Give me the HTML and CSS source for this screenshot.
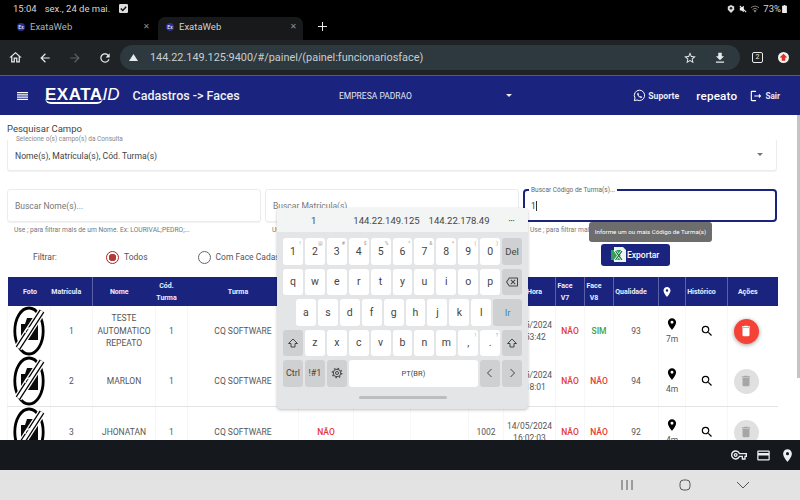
FILE: index.html
```html
<!DOCTYPE html>
<html lang="pt-BR">
<head>
    <meta charset="UTF-8">
    <meta name="viewport" content="width=device-width, initial-scale=1.0">
    <title>ExataWeb</title>
    <link rel="stylesheet" href="styles.css">
</head>
<body>
    <svg class="defs" width="0" height="0">
        <symbol id="i-pin" viewBox="0 0 24 24"><path d="M12 2C8.13 2 5 5.13 5 9c0 5.25 7 13 7 13s7-7.75 7-13c0-3.87-3.13-7-7-7zm0 9.5a2.5 2.5 0 0 1 0-5 2.5 2.5 0 0 1 0 5z"/></symbol>
        <symbol id="i-search" viewBox="0 0 24 24"><path d="M15.5 14h-.79l-.28-.27A6.471 6.471 0 0 0 16 9.5 6.5 6.5 0 1 0 9.5 16c1.61 0 3.09-.59 4.23-1.57l.27.28v.79l5 4.99L20.49 19l-4.99-5zm-6 0C7.01 14 5 11.99 5 9.5S7.01 5 9.5 5 14 7.01 14 9.5 11.99 14 9.5 14z"/></symbol>
        <symbol id="i-trash" viewBox="0 0 24 24"><path d="M6 19c0 1.1.9 2 2 2h8c1.1 0 2-.9 2-2V7H6v12zM19 4h-3.5l-1-1h-5l-1 1H5v2h14V4z"/></symbol>
        <symbol id="i-nophoto" viewBox="0 0 32 50">
            <ellipse cx="16" cy="25" rx="14.2" ry="23" fill="#fff" stroke="#000" stroke-width="2.8"/>
            <path d="M8 18h4l2-6h7l1 4h3v18H8z" fill="#0a0a0a"/>
            <path d="M29 5 5 42" stroke="#fff" stroke-width="8"/>
            <path d="M29 5 5 42" stroke="#000" stroke-width="5.500"/>
            <path d="M29 5 5 42" stroke="#fff" stroke-width="3"/>
            <path d="M12 27a5 5 0 0 1 6-5" fill="none" stroke="#fff" stroke-width="1.300"/>
        </symbol>
    </svg>

    <div class="status-bar">
        <span class="status-time">15:04</span>
        <span class="status-date">sex., 24 de mai.</span>
        <svg class="status-check" viewBox="0 0 10 10"><rect width="10" height="10" rx="1.5" fill="#ddd"/><path d="M2 5l2.2 2.2L8 3" fill="none" stroke="#111" stroke-width="1.6"/></svg>
        <span class="status-right">
            <svg class="status-ico" viewBox="0 0 10 10"><path d="M5 0l4 2v4l-4 4-4-4V2z" fill="#ddd"/><circle cx="5" cy="4" r="1.6" fill="#222"/></svg>
            <svg class="status-ico" viewBox="0 0 10 10"><path d="M1 3h2l3-2v8L3 7H1z" fill="#eee"/><path d="M1 1l8 8" stroke="#eee" stroke-width="1.3"/></svg>
            <svg class="status-ico" viewBox="0 0 10 10"><path d="M0 3.5a7 7 0 0 1 10 0M2 5.6a4.2 4.2 0 0 1 6 0M5 9 3.6 7.3a2 2 0 0 1 2.8 0z" fill="none" stroke="#aaa" stroke-width=".9"/></svg>
            <span>73%</span>
            <svg class="status-batt" viewBox="0 0 6 10"><path d="M2 0h2v1h2v9H0V1h2z" fill="#eee"/></svg>
        </span>
    </div>

    <div class="tab-strip">
        <div class="tab tab-first">
            <span class="favicon">Ex</span>
            <span class="tab-title">ExataWeb</span>
            <span class="tab-close">&#10005;</span>
        </div>
        <div class="tab tab-active">
            <span class="favicon">Ex</span>
            <span class="tab-title">ExataWeb</span>
            <span class="tab-close">&#10005;</span>
        </div>
        <svg class="tab-new" viewBox="0 0 10 10"><path d="M5 0v10M0 5h10" stroke="#eee" stroke-width="1.1"/></svg>
    </div>

    <div class="toolbar">
        <svg class="tool-ico first" viewBox="0 0 24 24"><path d="M12 5.69l5 4.5V18h-2v-6H9v6H7v-7.81l5-4.5M12 3L2 12h3v8h6v-6h2v6h6v-8h3L12 3z"/></svg>
        <svg class="tool-ico" viewBox="0 0 24 24"><path d="M20 11H7.83l5.59-5.59L12 4l-8 8 8 8 1.41-1.41L7.83 13H20v-2z"/></svg>
        <svg class="tool-ico off" viewBox="0 0 24 24"><path d="M12 4l-1.41 1.41L16.17 11H4v2h12.17l-5.58 5.59L12 20l8-8z"/></svg>
        <svg class="tool-ico" viewBox="0 0 24 24"><path d="M17.65 6.35C16.2 4.9 14.21 4 12 4c-4.42 0-7.99 3.58-7.99 8s3.57 8 7.99 8c3.73 0 6.84-2.55 7.73-6h-2.08c-.82 2.33-3.04 4-5.65 4-3.31 0-6-2.69-6-6s2.69-6 6-6c1.66 0 3.14.69 4.22 1.78L13 11h7V4l-2.35 2.35z"/></svg>
        <div class="url-pill">
            <svg class="url-warn" viewBox="0 0 10 10"><path d="M5 1l5 8H0z" fill="#e8eaed"/></svg>
            <span class="url-text">144.22.149.125:9400/#/painel/(painel:funcionariosface)</span>
            <svg class="url-ico star" viewBox="0 0 24 24"><path d="M22 9.24l-7.19-.62L12 2 9.19 8.63 2 9.24l5.46 4.73L5.82 21 12 17.27 18.18 21l-1.63-7.03L22 9.24zM12 15.4l-3.76 2.27 1-4.28-3.32-2.88 4.38-.38L12 6.1l1.71 4.04 4.38.38-3.32 2.88 1 4.28L12 15.4z"/></svg>
            <svg class="url-ico" viewBox="0 0 24 24"><path d="M19 9h-4V3H9v6H5l7 7 7-7zM5 18v2h14v-2H5z"/></svg>
        </div>
        <span class="tab-count">2</span>
        <span class="update-dot"><svg viewBox="0 0 10 10"><path d="M5 1.5 8.5 5H6.6v3H3.4V5H1.5z" fill="#d93025"/></svg></span>
    </div>

    <header class="navbar">
        <svg class="nav-menu" viewBox="0 0 14 10"><path d="M0 0h14v1.6H0zM0 2.8h14v1.6H0zM0 5.6h14v1.6H0zM0 8.4h14V10H0z" fill="#fff"/></svg>
        <div class="logo"><span class="logo-main">EXATA</span><span class="logo-id">ID</span></div>
        <div class="nav-title">Cadastros -&gt; Faces</div>
        <div class="nav-company">
            <span>EMPRESA PADRAO</span>
            <span class="caret"></span>
        </div>
        <div class="nav-right">
            <svg class="nav-wa" viewBox="0 0 24 24"><path d="M12 2.2a9.6 9.6 0 0 0-8.3 14.5L2.4 21.6l5-1.3A9.6 9.6 0 1 0 12 2.2z" fill="none" stroke="#fff" stroke-width="1.8"/><path d="M8.8 7.2c-.9.7-1.3 1.9-.8 3.3 1 2.6 2.9 4.6 5.6 5.7 1.4.5 2.6.1 3.3-.9.3-.5.2-1-.2-1.2l-1.9-.9c-.4-.2-.7-.1-1 .3l-.6.7c-1.400-.6-2.500-1.700-3.100-3l.6-.6c.3-.3.4-.6.2-1l-.8-1.900c-.2-.6-.8-.8-1.300-.5z" fill="#fff"/></svg>
            <span class="nav-support">Suporte</span>
            <span class="nav-user">repeato</span>
            <svg class="nav-exit" viewBox="0 0 24 24"><path d="M5 5h7V3H5c-1.100 0-2 .9-2 2v14c0 1.100.9 2 2 2h7v-2H5V5zm16 7l-4-4v3H9v2h8v3l4-4z" fill="#fff"/></svg>
            <span class="nav-sair">Sair</span>
        </div>
    </header>

    <main class="page">
        <div class="search-title">Pesquisar Campo</div>
        <div class="outlined select-box">
            <span class="float-label">Selecione o(s) campo(s) da Consulta</span>
            <span>Nome(s), Matrícula(s), Cód. Turma(s)</span>
            <span class="select-caret"></span>
        </div>

        <div class="search-row">
            <div class="search-col">
                <div class="outlined field"><span class="placeholder">Buscar Nome(s)...</span></div>
                <div class="hint">Use ; para filtrar mais de um Nome. Ex: LOURIVAL;PEDRO;...</div>
            </div>
            <div class="search-col">
                <div class="outlined field"><span class="placeholder">Buscar Matrícula(s)...</span></div>
                <div class="hint">Use ; para filtrar mais de uma Matrícula</div>
            </div>
            <div class="search-col">
                <div class="field field-focus">
                    <span class="float-label focus-label">Buscar Código de Turma(s)...</span>
                    <span class="typed">1</span><span class="cursor"></span>
                </div>
                <div class="hint">Use ; para filtrar mais de um Código</div>
            </div>
        </div>

        <div class="filter-row">
            <span class="filter-label">Filtrar:</span>
            <span class="radio radio-on"></span>
            <span class="radio-text">Todos</span>
            <span class="radio radio-second"></span>
            <span class="radio-text">Com Face Cadastrada</span>
            <button class="export-btn">
                <svg class="excel" viewBox="0 0 16 16">
                    <path d="M3 0h9l3 3v12H3z" fill="#e9f5ec"/>
                    <path d="M0 3h10v10H0z" fill="#2e9e5b"/>
                    <path d="M3.500 3 12 14M12 3l-8.500 11" stroke="#fff" stroke-width="2.600"/>
                    <path d="M4.500 4 11 13M11 4l-6.500 9" stroke="#17693a" stroke-width="1.200"/>
                </svg>
                Exportar
            </button>
        </div>

        <table class="grid">
            <colgroup>
                <col class="c-foto"><col class="c-mat"><col class="c-nome"><col class="c-cod"><col class="c-turma">
                <col class="c-a"><col class="c-b"><col class="c-c"><col class="c-d"><col class="c-hora">
                <col class="c-face"><col class="c-face"><col class="c-qual"><col class="c-pin"><col class="c-hist"><col class="c-acao">
            </colgroup>
            <thead>
                <tr>
                    <th class="th-foto">Foto</th><th>Matrícula</th><th class="th-line">Nome</th><th>Cód. Turma</th><th>Turma</th>
                    <th></th><th></th><th></th><th></th><th class="th-line th-hora">Hora</th>
                    <th class="th-line">Face V7</th><th class="th-line">Face V8</th><th class="th-line">Qualidade</th>
                    <th class="th-line"><svg class="th-pin"><use href="#i-pin"/></svg></th>
                    <th class="th-line">Histórico</th><th class="th-line">Ações</th>
                </tr>
            </thead>
            <tbody>
                <tr>
                    <td><svg class="nophoto"><use href="#i-nophoto"/></svg></td>
                    <td>1</td><td>TESTE AUTOMATICO REPEATO</td><td>1</td><td>CQ SOFTWARE</td>
                    <td></td><td></td><td></td><td></td><td>14/05/2024 15:53:42</td>
                    <td class="no">NÃO</td><td class="yes">SIM</td><td>93</td>
                    <td><svg class="pin"><use href="#i-pin"/></svg><div>7m</div></td>
                    <td><svg class="lens"><use href="#i-search"/></svg></td>
                    <td class="td-fab"><span class="fab fab-red"><svg><use href="#i-trash"/></svg></span></td>
                </tr>
                <tr class="row-end">
                    <td><svg class="nophoto"><use href="#i-nophoto"/></svg></td>
                    <td>2</td><td>MARLON</td><td>1</td><td>CQ SOFTWARE</td>
                    <td></td><td></td><td></td><td></td><td>14/05/2024 16:18:01</td>
                    <td class="no">NÃO</td><td class="no">NÃO</td><td>94</td>
                    <td><svg class="pin"><use href="#i-pin"/></svg><div>4m</div></td>
                    <td><svg class="lens"><use href="#i-search"/></svg></td>
                    <td class="td-fab"><span class="fab"><svg><use href="#i-trash"/></svg></span></td>
                </tr>
                <tr>
                    <td><svg class="nophoto"><use href="#i-nophoto"/></svg></td>
                    <td>3</td><td>JHONATAN</td><td>1</td><td>CQ SOFTWARE</td>
                    <td class="no">NÃO</td><td></td><td></td><td>1002</td><td>14/05/2024 16:02:03</td>
                    <td class="no">NÃO</td><td class="no">NÃO</td><td>92</td>
                    <td><svg class="pin"><use href="#i-pin"/></svg><div>4m</div></td>
                    <td><svg class="lens"><use href="#i-search"/></svg></td>
                    <td class="td-fab"><span class="fab"><svg><use href="#i-trash"/></svg></span></td>
                </tr>
            </tbody>
        </table>

        <div class="scroll-thumb"></div>
        <div class="tooltip">Informe um ou mais Código de Turma(s)</div>

        <div class="keyboard">
            <div class="kb-suggest">
                <span class="sug-one">1</span>
                <span class="sug-ip">144.22.149.125</span>
                <span class="sug-ip2">144.22.178.49</span>
                <span class="sug-more">•••</span>
            </div>
            <div class="kb-keys">
                <div class="kb-row">
                    <span class="key">1<sup>!</sup></span><span class="key">2<sup>@</sup></span><span class="key">3<sup>#</sup></span><span class="key">4<sup>$</sup></span><span class="key">5<sup>%</sup></span><span class="key">6<sup>^</sup></span><span class="key">7<sup>&amp;</sup></span><span class="key">8<sup>*</sup></span><span class="key">9<sup>(</sup></span><span class="key">0<sup>)</sup></span><span class="key key-fn">Del</span>
                </div>
                <div class="kb-row">
                    <span class="key">q</span><span class="key">w</span><span class="key">e</span><span class="key">r</span><span class="key">t</span><span class="key">y</span><span class="key">u</span><span class="key">i</span><span class="key">o</span><span class="key">p</span>
                    <span class="key key-fn"><svg class="kb-ico" viewBox="0 0 24 24"><path d="M22 3H7c-.69 0-1.230.35-1.590.88L0 12l5.410 8.110c.36.53.9.89 1.590.89h15c1.100 0 2-.9 2-2V5c0-1.100-.9-2-2-2zm0 16H7.070L2.400 12l4.660-7H22v14zM10.410 17 14 13.410 17.590 17 19 15.590 15.410 12 19 8.410 17.590 7 14 10.590 10.410 7 9 8.410 12.590 12 9 15.590z"/></svg></span>
                </div>
                <div class="kb-row kb-row-home">
                    <span class="key">a</span><span class="key">s</span><span class="key">d</span><span class="key">f</span><span class="key">g</span><span class="key">h</span><span class="key">j</span><span class="key">k</span><span class="key">l</span>
                    <span class="key key-fn key-go">Ir</span>
                </div>
                <div class="kb-row">
                    <span class="key key-fn"><svg class="kb-ico" viewBox="0 0 24 24"><path d="M12 4 3 13h5v7h8v-7h5z" fill="none" stroke="#444" stroke-width="2"/></svg></span>
                    <span class="key">z</span><span class="key">x</span><span class="key">c</span><span class="key">v</span><span class="key">b</span><span class="key">n</span><span class="key">m</span><span class="key">,<sup>!</sup></span><span class="key">.<sup>?</sup></span>
                    <span class="key key-fn"><svg class="kb-ico" viewBox="0 0 24 24"><path d="M12 4 3 13h5v7h8v-7h5z" fill="none" stroke="#444" stroke-width="2"/></svg></span>
                </div>
                <div class="kb-row">
                    <span class="key key-fn key-small">Ctrl</span><span class="key key-fn key-small">!#1</span>
                    <span class="key key-fn"><svg class="kb-ico" viewBox="0 0 24 24"><circle cx="12" cy="12" r="3" fill="none" stroke="#444" stroke-width="2"/><circle cx="12" cy="12" r="7.500" fill="none" stroke="#444" stroke-width="2"/><circle cx="12" cy="12" r="9.500" fill="none" stroke="#444" stroke-width="2.500" stroke-dasharray="3 4.450"/></svg></span>
                    <span class="key key-space">PT(BR)</span>
                    <span class="key key-fn"><svg class="kb-ico" viewBox="0 0 24 24"><path d="M15 4l-8 8 8 8" fill="none" stroke="#444" stroke-width="2"/></svg></span>
                    <span class="key key-fn"><svg class="kb-ico" viewBox="0 0 24 24"><path d="M9 4l8 8-8 8" fill="none" stroke="#444" stroke-width="2"/></svg></span>
                </div>
                <div class="kb-handle"></div>
            </div>
        </div>
    </main>

    <div class="sys-bar">
        <svg class="sys-ico sys-key" viewBox="0 0 24 24"><path d="M22 19h-6v-4h-2.680c-1.140 2.420-3.600 4-6.320 4-3.860 0-7-3.140-7-7s3.140-7 7-7c2.720 0 5.170 1.580 6.320 4H24v6h-2v4zm-4-2h2v-4h2v-2H11.940l-.23-.67C11.010 8.340 9.110 7 7 7c-2.760 0-5 2.240-5 5s2.240 5 5 5c2.110 0 4.010-1.340 4.710-3.330l.23-.67H18v4zM7 15c-1.650 0-3-1.350-3-3s1.350-3 3-3 3 1.350 3 3-1.350 3-3 3zm0-4c-.55 0-1 .45-1 1s.45 1 1 1 1-.45 1-1-.45-1-1-1z"/></svg>
        <svg class="sys-ico" viewBox="0 0 24 24"><path d="M20 4H4c-1.110 0-1.990.89-1.990 2L2 18c0 1.110.89 2 2 2h16c1.110 0 2-.89 2-2V6c0-1.110-.89-2-2-2zm0 14H4v-6h16v6zm0-10H4V6h16v2z"/></svg>
        <svg class="sys-ico"><use href="#i-pin"/></svg>
    </div>

    <div class="nav-keys">
        <svg class="nav-key" viewBox="0 0 14 14"><path d="M2 2v10M7 2v10M12 2v10" stroke="#555" stroke-width="1"/></svg>
        <svg class="nav-key" viewBox="0 0 14 14"><rect x="2" y="2" width="10" height="10" rx="3.500" fill="none" stroke="#555" stroke-width="1"/></svg>
        <svg class="nav-key" viewBox="0 0 14 14"><path d="M1 4l6 6 6-6" fill="none" stroke="#555" stroke-width="1"/></svg>
    </div>
</body>
</html>
```

FILE: styles.css
```css
* {
    box-sizing: border-box;
}
html, body {
    margin: 0;
    height: 100%;
    overflow: hidden;
}
body {
    width: 800px;
    height: 500px;
    display: flex;
    flex-direction: column;
    font-family: Roboto, "Liberation Sans", sans-serif;
    background-color: #000;
}
.defs {
    position: absolute;
}

/* android status bar */
.status-bar {
    height: 17px;
    display: flex;
    align-items: center;
    padding: 0 0 0 13px;
    background-color: #000;
    color: #d5d5d5;
    font-size: 9.5px;
    flex-shrink: 0;
}
.status-date {
    margin-left: 8px;
}
.status-check {
    width: 9px;
    height: 9px;
    margin-left: 9px;
}
.status-right {
    margin-left: auto;
    margin-right: 13px;
    display: flex;
    align-items: center;
    gap: 3px;
    font-size: 9.5px;
}
.status-ico {
    width: 8px;
    height: 8px;
    margin-right: 1px;
}
.status-batt {
    width: 5px;
    height: 8px;
    margin-left: -2px;
}

/* chrome */
.tab-strip {
    height: 23px;
    display: flex;
    align-items: center;
    padding-left: 3px;
    color: #c9cccf;
    font-size: 9.5px;
    flex-shrink: 0;
}
.tab {
    height: 23px;
    display: flex;
    align-items: center;
    padding-bottom: 4px;
    color: #aeb1b4;
}
.tab-first {
    width: 155px;
    padding-left: 14px;
    padding-right: 8px;
}
.tab-active {
    width: 145px;
    padding-left: 8px;
    padding-right: 6px;
    background-color: #17191b;
    border-radius: 7px 7px 0 0;
    color: #cfd2d4;
}
.favicon {
    width: 8px;
    height: 8px;
    border-radius: 50%;
    background-color: #2a2f8f;
    color: #fff;
    font-size: 5px;
    line-height: 8px;
    text-align: center;
    margin-right: 5px;
}
.tab-close {
    margin-left: auto;
    font-size: 8px;
    color: #8c8f92;
}
.tab-new {
    width: 9px;
    height: 9px;
    margin-left: 15px;
    margin-bottom: 4px;
}
.toolbar {
    height: 35px;
    display: flex;
    align-items: center;
    padding: 0 0 0 8px;
    background-color: #1f2326;
    flex-shrink: 0;
}
.tool-ico {
    width: 14px;
    height: 14px;
    fill: #e8eaed;
    margin-right: 16px;
}
.tool-ico.off {
    fill: #5c6063;
}
.tool-ico.first {
    margin-right: 15px;
    width: 15px;
    height: 15px;
}
.url-pill {
    width: 620px;
    height: 25px;
    margin-left: -8px;
    border-radius: 13px;
    background-color: #2d393e;
    display: flex;
    align-items: center;
    padding-left: 9px;
    color: #c8cdd0;
    font-size: 10.9px;
}
.url-warn {
    width: 9px;
    height: 9px;
    margin-right: 12px;
}
.url-text {
    flex: 1;
}
.url-ico {
    width: 14px;
    height: 14px;
    fill: #e8eaed;
    margin-right: 13px;
}
.url-ico.star {
    margin-right: 16px;
}
.tab-count {
    width: 11px;
    height: 11px;
    border: 1px solid #e8eaed;
    border-radius: 2px;
    color: #e8eaed;
    font-size: 7px;
    line-height: 9px;
    text-align: center;
    margin-left: 12px;
}
.update-dot {
    width: 11px;
    height: 11px;
    border-radius: 50%;
    background-color: #f1f1f1;
    margin-left: 15px;
    display: flex;
}

/* app navbar */
.navbar {
    height: 40px;
    display: flex;
    align-items: center;
    padding-left: 17px;
    background-color: #1a237e;
    border-top: 1px solid #50588f;
    color: #fff;
    flex-shrink: 0;
}
.nav-menu {
    width: 11px;
    height: 8px;
}
.logo {
    margin-left: 17px;
    display: flex;
    align-items: flex-start;
}
.logo-main {
    font-family: "Liberation Sans", sans-serif;
    font-weight: bold;
    font-size: 17px;
    letter-spacing: 0.5px;
    border-bottom: 2px solid #fff;
    border-radius: 0 0 6px 6px;
    line-height: 15px;
}
.logo-id {
    font-family: "Liberation Sans", sans-serif;
    font-style: italic;
    font-size: 17px;
    line-height: 15px;
}
.nav-title {
    margin-left: 13px;
    font-size: 12.5px;
    font-weight: 500;
    color: #f0f0f5;
}
.nav-company {
    position: absolute;
    left: 339px;
    width: 175px;
    display: flex;
    align-items: center;
    font-size: 8.5px;
    color: #e6e6ee;
}
.caret {
    margin-left: auto;
    margin-right: 2px;
    border: 3px solid transparent;
    border-top-color: #eee;
    border-bottom-width: 0;
}
.nav-right {
    margin-left: auto;
    margin-right: 20px;
    display: flex;
    align-items: center;
}
.nav-wa {
    width: 13px;
    height: 13px;
    margin-right: 2px;
}
.nav-support {
    font-size: 8.7px;
    font-weight: 700;
    color: #e8e9f3;
}
.nav-sair {
    font-size: 8.2px;
    font-weight: 700;
    color: #e8e9f3;
}
.nav-user {
    font-size: 11.7px;
    font-weight: 500;
    margin: 0 12px 0 17px;
    letter-spacing: 0.2px;
}
.nav-exit {
    width: 14px;
    height: 14px;
    margin-right: 2px;
}

/* page */
.page {
    position: relative;
    height: 325px;
    flex-shrink: 0;
    overflow: hidden;
    background-color: #fff;
    padding: 8px 23px 0 7px;
    color: #555;
}
.search-title {
    font-size: 9.5px;
    line-height: 11px;
    color: #444;
}
.outlined {
    border: 1px solid #ececec;
    border-radius: 3px;
    box-shadow: 0 1px 1px rgba(0,0,0,0.06);
}
.select-box {
    position: relative;
    height: 32px;
    margin-top: 5px;
    padding: 2px 7px 0;
    display: flex;
    align-items: center;
    font-size: 8.6px;
    color: #444;
    border-top-color: transparent;
}
.float-label {
    position: absolute;
    left: 7px;
    top: -5px;
    font-size: 6.5px;
    line-height: 8px;
    color: #888;
    background-color: #fff;
    padding: 0 1px;
}
.select-caret {
    margin-left: auto;
    margin-right: 6px;
    margin-top: -3px;
    border: 3px solid transparent;
    border-top-color: #777;
    border-bottom-width: 0;
}
.search-row {
    display: grid;
    grid-template-columns: repeat(3, 254px);
    gap: 4px;
    margin-top: 18px;
}
.field {
    position: relative;
    height: 33px;
    padding: 0 7px;
    display: flex;
    align-items: center;
    font-size: 8.5px;
}
.placeholder {
    color: #777;
}
.field-focus {
    border: 2px solid #1a237e;
    border-radius: 4px;
    padding-left: 6px;
}
.focus-label {
    left: 4px;
    top: -5px;
    padding: 0 2px;
    color: #666;
}
.typed {
    color: #333;
}
.cursor {
    width: 1px;
    height: 10px;
    background-color: #333;
}
.hint {
    font-size: 6.7px;
    line-height: 8px;
    margin-top: 4px;
    padding-left: 7px;
    color: #777;
}
.filter-row {
    display: flex;
    align-items: center;
    height: 22px;
    margin-top: 12px;
    font-size: 8.5px;
    color: #555;
}
.filter-label {
    margin-left: 26px;
    width: 73px;
}
.radio {
    width: 13px;
    height: 13px;
    border: 1px solid #666;
    border-radius: 50%;
    margin-right: 5px;
    position: relative;
}
.radio-on {
    border-color: #b71c1c;
    background: radial-gradient(circle, #b33a3a 0 3.5px, #fff 4px);
}
.radio-second {
    margin-left: 50px;
}
.export-btn {
    position: absolute;
    left: 601px;
    top: 129px;
    width: 69px;
    height: 22px;
    border: none;
    border-radius: 3px;
    background-color: #1a237e;
    color: #fff;
    font-family: inherit;
    font-size: 8.5px;
    font-weight: 500;
    display: flex;
    align-items: center;
    padding: 0 0 0 10px;
}
.excel {
    width: 16px;
    height: 16px;
}

/* table */
.grid {
    table-layout: fixed;
    width: 770px;
    border-collapse: collapse;
    margin-top: 9px;
    font-size: 8.5px;
    color: #555;
}
.c-foto { width: 43px; }
.c-mat { width: 42px; }
.c-nome { width: 63px; }
.c-cod { width: 32px; }
.c-turma { width: 111px; }
.c-a { width: 55px; }
.c-b { width: 57px; }
.c-c { width: 58px; }
.c-d { width: 35px; }
.c-hora { width: 52px; }
.c-face { width: 29px; }
.c-qual { width: 45px; }
.c-pin { width: 27px; }
.c-hist { width: 42px; }
.c-acao { width: 50px; }
.grid th {
    height: 29px;
    padding: 0 10px 0 0;
    background-color: #1a237e;
    color: #eef;
    font-size: 7px;
    font-weight: 700;
    line-height: 12px;
}
.grid .th-foto {
    padding: 0 0 0 2px;
}
.grid .th-hora {
    padding: 0 0 0 10px;
}
.th-line {
    border-left: 1px solid #5a62a5;
}
.th-pin {
    width: 12px;
    height: 12px;
    fill: #fff;
    vertical-align: middle;
}
.grid td {
    height: 50px;
    padding: 0 1px;
    text-align: center;
    line-height: 12.5px;
    border-left: 1px solid #f7f7f7;
}
.grid .td-fab {
    padding-right: 14px;
}
.row-end td {
    border-bottom: 1px solid #e4e4e4;
}
.nophoto {
    width: 32px;
    height: 50px;
    display: block;
    margin: 0 auto 0 4px;
}
.no {
    color: #e53935;
    font-weight: 500;
}
.yes {
    color: #43a047;
    font-weight: 500;
}
.pin {
    width: 14px;
    height: 14px;
    display: block;
    margin: 0 auto 2px;
}
.lens {
    width: 14px;
    height: 14px;
    display: block;
    margin: 0 auto;
}
.fab {
    width: 25px;
    height: 25px;
    border-radius: 50%;
    background-color: #e0e0e0;
    fill: #a6a6a6;
    display: inline-flex;
    align-items: center;
    justify-content: center;
}
.fab svg {
    width: 14px;
    height: 14px;
}
.fab-red {
    background-color: #f44336;
    fill: #fff;
    box-shadow: 0 1px 4px rgba(0,0,0,0.4);
}

/* overlays */
.scroll-thumb {
    position: absolute;
    right: 0;
    top: 0;
    width: 3px;
    height: 263px;
    background-color: #c4c4c4;
}
.tooltip {
    position: absolute;
    left: 589px;
    top: 107px;
    width: 123px;
    height: 20px;
    border-radius: 3px;
    background-color: #6d6d6d;
    color: #fff;
    font-size: 6.2px;
    line-height: 20px;
    text-align: center;
}
.keyboard {
    position: absolute;
    left: 277px;
    top: 93px;
    width: 251px;
    height: 201px;
    background-color: #e4e5e6;
    border-radius: 4px;
    box-shadow: 0 1px 3px rgba(0,0,0,0.25);
    color: #444;
}
.kb-suggest {
    height: 24px;
    display: flex;
    align-items: center;
    background-color: #f3f4f4;
    border-radius: 4px 4px 0 0;
    font-size: 9.5px;
    position: relative;
}
.sug-one {
    margin-left: 34px;
}
.sug-ip {
    margin-left: 37px;
}
.sug-ip2 {
    margin-left: 9px;
}
.sug-more {
    margin-left: 19px;
    font-size: 6px;
}
.kb-keys {
    padding: 6px 6px 0;
    display: flex;
    flex-direction: column;
    gap: 4px;
}
.kb-row {
    height: 26.5px;
    display: flex;
    gap: 2px;
}
.kb-row-home {
    padding-left: 13px;
}
.key {
    position: relative;
    flex: 1;
    background-color: #fff;
    border-radius: 3px;
    display: flex;
    align-items: center;
    justify-content: center;
    font-size: 10.5px;
    color: #444;
}
.key sup {
    position: absolute;
    top: 2px;
    right: 2px;
    font-size: 5px;
    line-height: 6px;
    color: #999;
}
.key-fn {
    background-color: #cfd0d1;
    font-size: 9.5px;
}
.key-small {
    font-size: 9px;
}
.key-go {
    flex: 1.450;
    color: #3d86c6;
}
.key-space {
    flex: 6.500;
    font-size: 7.5px;
}
.kb-ico {
    width: 12px;
    height: 12px;
    fill: #444;
}
.kb-handle {
    width: 88px;
    height: 3px;
    border-radius: 2px;
    background-color: #bcbdbe;
    margin: 5px auto 0;
}

/* bottom bars */
.sys-bar {
    height: 30px;
    display: flex;
    align-items: center;
    justify-content: flex-end;
    gap: 9px;
    padding-right: 5px;
    background-color: #15191d;
    flex-shrink: 0;
}
.sys-ico {
    width: 15px;
    height: 15px;
    fill: #eceff1;
}
.sys-key {
    width: 16px;
    height: 16px;
}
.nav-keys {
    height: 30px;
    display: flex;
    align-items: center;
    gap: 44px;
    padding-left: 620px;
    background-color: #e3e3e3;
    flex-shrink: 0;
}
.nav-key {
    width: 14px;
    height: 14px;
}
```
